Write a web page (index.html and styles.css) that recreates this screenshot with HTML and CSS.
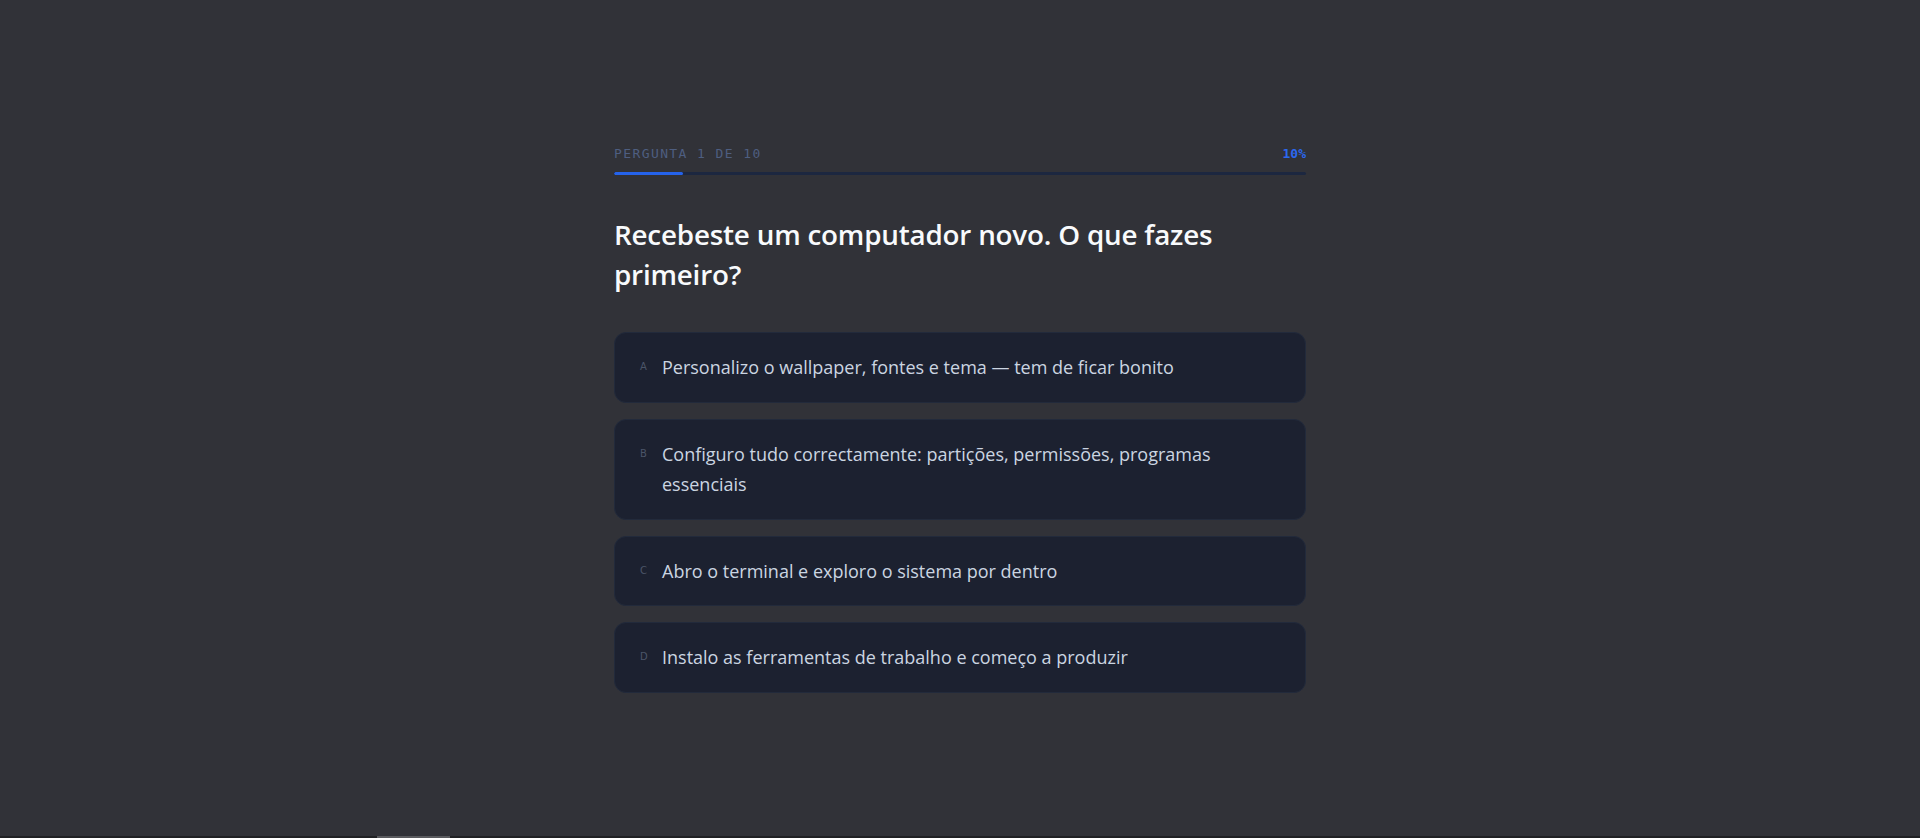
FILE: index.html
```html
<!DOCTYPE html>
<html>
	<head>
		<meta charset="UTF-8">
		<title>Quiz</title>
		<link rel="stylesheet" href="styles.css">
	</head>
	<body>

		<!-- quiz screen -->
		<div class="page">
			<main class="quiz">

				<!-- progress -->
				<div class="progress-head">
					<span class="progress-label">Pergunta 1 de 10</span>
					<span class="progress-pct">10%</span>
				</div>
				<div class="progress-track">
					<div class="progress-fill" style="width: 10%"></div>
				</div>

				<h1 class="question">Recebeste um computador novo. O que fazes primeiro?</h1>

				<!-- answers -->
				<ul class="options">
					<li>
						<button class="option" type="button">
							<span class="option-key">A</span>
							<span class="option-text">Personalizo o wallpaper, fontes e tema — tem de ficar bonito</span>
						</button>
					</li>
					<li>
						<button class="option" type="button">
							<span class="option-key">B</span>
							<span class="option-text">Configuro tudo correctamente: partições, permissões, programas essenciais</span>
						</button>
					</li>
					<li>
						<button class="option" type="button">
							<span class="option-key">C</span>
							<span class="option-text">Abro o terminal e exploro o sistema por dentro</span>
						</button>
					</li>
					<li>
						<button class="option" type="button">
							<span class="option-key">D</span>
							<span class="option-text">Instalo as ferramentas de trabalho e começo a produzir</span>
						</button>
					</li>
				</ul>

			</main>
		</div>

		<!-- horizontal scrollbar strip -->
		<div class="hscroll"><div class="hscroll-thumb"></div></div>

	</body>
</html>
```

FILE: styles.css
```css
*{
	margin: 0;
	padding: 0;
	box-sizing: border-box;
}

html, body{
	height: 100%;
}

body{
	background-color: #313238;
	color: #e2e8f0;
	font-family: "Open Sans", "Noto Sans", sans-serif;
	overflow: hidden;
}

/*centre the quiz in the window*/
.page{
	min-height: 100vh;
	display: flex;
	align-items: center;
	justify-content: center;
}

.quiz{
	width: 692px;
}

/*progress*/
.progress-head{
	display: flex;
	justify-content: space-between;
	align-items: baseline;
	font-family: "DejaVu Sans Mono", "Liberation Mono", monospace;
	font-size: 13px;
	line-height: 18px;
}

.progress-label{
	color: #4e5e80;
	text-transform: uppercase;
	letter-spacing: 1.4px;
}

.progress-pct{
	color: #2b68f0;
	font-weight: 600;
}

.progress-track{
	height: 3px;
	margin-top: 9px;
	border-radius: 2px;
	background-color: #1c2740;
	overflow: hidden;
}

.progress-fill{
	height: 100%;
	border-radius: 2px;
	background-color: #2563eb;
}

/*question*/
.question{
	margin-top: 39px;
	color: #f8fafc;
	font-size: 27.8px;
	font-weight: 600;
	line-height: 40px;
	letter-spacing: -0.2px;
}

/*answers*/
.options{
	list-style: none;
	margin-top: 38px;
	display: flex;
	flex-direction: column;
	gap: 16px;
}

.option{
	width: 100%;
	display: flex;
	align-items: flex-start;
	padding: 19px 24px 19px 25px;
	border: 1px solid #222a3b;
	border-radius: 12px;
	background-color: #1c2130;
	color: #cbd5e1;
	font-family: inherit;
	font-size: 18px;
	line-height: 30.6px;
	text-align: left;
	cursor: pointer;
}

.option:hover{
	border-color: #2d3850;
}

.option-key{
	flex: none;
	width: 22px;
	font-family: "DejaVu Sans", sans-serif;
	font-size: 10px;
	color: #4b5568;
}

.option-text{
	flex: 1;
}

/*scrollbar strip at the bottom edge*/
.hscroll{
	position: fixed;
	left: 0;
	right: 0;
	bottom: 0;
	height: 2px;
	background-color: #202124;
}

.hscroll-thumb{
	width: 73px;
	height: 100%;
	margin-left: 377px;
	background-color: #5a5b5f;
}
```
